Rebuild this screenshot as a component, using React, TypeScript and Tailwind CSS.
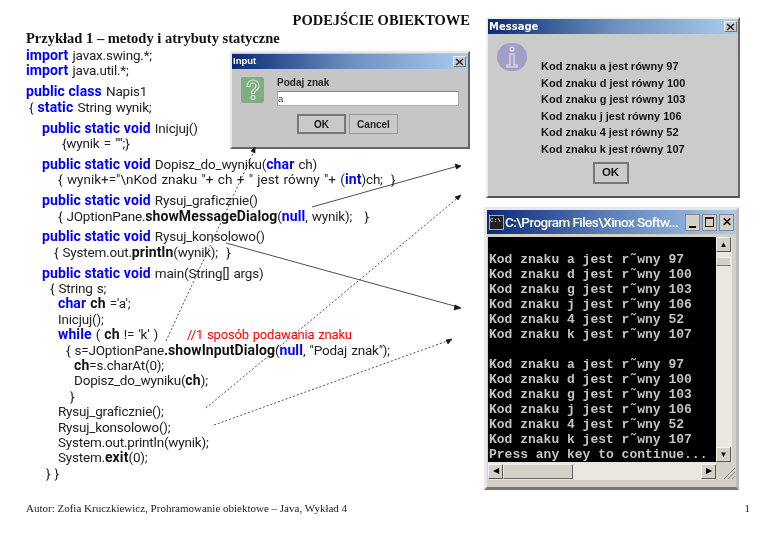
import React from "react";

const B = ({ children }: { children: React.ReactNode }) => <b className="font-bold text-[#0000ff] text-[14px] tracking-[0.1px] [word-spacing:0px]">{children}</b>;
const K = ({ children }: { children: React.ReactNode }) => <b className="font-bold text-[#111] text-[14px] tracking-[0.1px] [word-spacing:0px]">{children}</b>;

const Line = ({ pl = 0, children }: { pl?: number; children: React.ReactNode }) => (
  <div className="h-[15.4px] leading-[15.4px] whitespace-pre" style={{ paddingLeft: pl }}>{children}</div>
);

const Group = ({ children }: { children: React.ReactNode }) => <div className="mb-[5.5px]">{children}</div>;

const msgs = ["a jest równy 97", "d jest równy 100", "g jest równy 103", "j jest równy 106", "4 jest równy 52", "k jest równy 107"];
const con = ["a jest r˜wny 97", "d jest r˜wny 100", "g jest r˜wny 103", "j jest r˜wny 106", "4 jest r˜wny 52", "k jest r˜wny 107"];

const XBtn = () => (
  <div className="w-[13px] h-[11px] bg-[#cccccc] border border-[#eee] border-r-[#777] border-b-[#777] flex items-center justify-center">
    <svg width="9" height="8" viewBox="0 0 9 8"><path d="M1 1l7 6M8 1L1 7" stroke="#222" strokeWidth="1.6" /></svg>
  </div>
);

function InputDialog() {
  return (
    <div className="absolute left-[230px] top-[51px] w-[240px] h-[98px] bg-[#c6c6c6] border-2 border-[#e8e8e8] border-r-[#666] border-b-[#666] flex flex-col font-['Liberation_Sans',sans-serif]">
      <div className="h-[15px] mt-[1px] bg-gradient-to-r from-[#0c2a78] via-[#6d8fbd] to-[#a9cdf0] flex items-center justify-between pl-[1px] pr-[2px]">
        <span className="text-white text-[9.5px] font-bold">Input</span>
        <XBtn />
      </div>
      <div className="flex pl-[9px] pt-[7px]">
        <div className="w-[23px] h-[26px] bg-[#7fae80] rounded-[2px] flex items-center justify-center mt-[1px]">
          <svg width="16" height="22" viewBox="0 0 16 22" fill="none" stroke="#dcebdc" strokeWidth="1.1">
            <path d="M2 7.5C2 3 5 1 8 1s6 2 6 6c0 3-2 4-3.5 5-.8.6-1 1.2-1 2.5H6.5c0-2.2.6-3.3 2-4.3C10 9 11 8.500 11 7c0-1.500-1.300-3-3-3S5 5.500 5 7.500z" />
            <circle cx="8" cy="18.500" r="2" />
          </svg>
        </div>
        <div className="ml-[13px] w-[182px]">
          <div className="text-[10px] font-bold text-[#222] leading-[14px]">Podaj znak</div>
          <div className="h-[15px] mt-[1px] bg-white border border-[#aaa] border-t-[#888] text-[9.5px] leading-[14px] text-[#444]">a</div>
          <div className="flex gap-[3px] ml-[20px] mt-[8px]">
            <div className="w-[49px] h-[20px] border-2 border-[#777] bg-[#c9c9c9] flex items-center justify-center text-[10px] font-bold text-[#111]">OK</div>
            <div className="w-[49px] h-[20px] border border-[#999] bg-[#c9c9c9] flex items-center justify-center text-[10px] font-bold text-[#222]">Cancel</div>
          </div>
        </div>
      </div>
    </div>
  );
}

function MessageDialog() {
  return (
    <div className="absolute left-[486px] top-[17px] w-[254px] h-[181px] bg-[#cbcbcb] border-2 border-[#eee] border-r-[#666] border-b-[#555] flex flex-col font-['Liberation_Sans',sans-serif]">
      <div className="h-[15px] bg-gradient-to-r from-[#0c2a78] via-[#6d8fbd] to-[#a9cdf0] flex items-center justify-between pl-[1px] pr-[1px]">
        <span className="text-white text-[10px] font-bold font-['DejaVu_Sans',sans-serif]">Message</span>
        <XBtn />
      </div>
      <div className="flex relative">
        <div className="w-[30px] h-[28px] rounded-full bg-[#a29fc6] ml-[9px] mt-[9px] flex items-center justify-center">
          <svg width="12" height="22" viewBox="0 0 12 22" fill="none" stroke="#e7e6f2" strokeWidth="1.1">
            <circle cx="6" cy="3" r="2" /><path d="M4 8h4v11h3v2H1v-2h3z" />
          </svg>
        </div>
        <div className="ml-[14px] mt-[24px]">
          {msgs.map((m) => (
            <div key={m} className="text-[11px] font-bold leading-[16.5px] text-[#111] whitespace-pre">Kod znaku {m}</div>
          ))}
        </div>
      </div>
      <div className="self-center mt-[5px] ml-[-5px] w-[36px] h-[22px] border-2 border-[#777] flex items-center justify-center text-[11.5px] font-bold text-[#111]">OK</div>
    </div>
  );
}

function ConsoleWindow() {
  const sbBtn = "w-[15px] h-[15px] bg-[#d4d0c8] border border-[#f4f4f4] border-r-[#555] border-b-[#555] flex items-center justify-center text-[8px] text-black shrink-0";
  const capBtn = "w-[15px] h-[17px] bg-[#d4d0c8] border border-[#888] flex items-center justify-center";
  return (
    <div className="absolute left-[484px] top-[207px] w-[255px] h-[283px] bg-[#d4d0c8] border-[3px] border-[#e8e8e8] border-r-[#bbb] border-b-[#777] flex flex-col">
      <div className="h-[24px] bg-gradient-to-r from-[#0c2a78] via-[#5d82b8] to-[#a9cdf0] flex items-center pl-[2px] pr-[2px] shrink-0">
        <div className="w-[15px] h-[15px] bg-[#222] border border-[#aaa] text-[6px] leading-[10px] text-white font-['Liberation_Mono',monospace] shrink-0">C:\</div>
        <span className="ml-[1px] text-white text-[13.5px] font-medium font-['Roboto',sans-serif] whitespace-pre tracking-[-0.55px]">C:\Program Files\Xinox Softw...</span>
        <div className="flex ml-auto text-[12px] font-bold font-['Liberation_Sans',sans-serif] text-[#111]">
          <div className={`${capBtn} items-end`}><div className="w-[7px] h-[2px] bg-black mb-[2px]" /></div>
          <div className={`${capBtn} ml-[2px]`}><div className="w-[9px] h-[10px] border border-[#222] border-t-2" /></div>
          <div className={`${capBtn} ml-[2px]`}>✕</div>
        </div>
      </div>
      <div className="flex h-[225px] mt-[3px] ml-[1px] shrink-0">
        <div className="w-[228px] bg-black text-[#c4c4c4] font-['Liberation_Mono',monospace] text-[13px] font-bold leading-[15px] pl-[1px] pt-[15px] whitespace-pre overflow-hidden">
          {con.map((c) => <div key={c}>Kod znaku {c}</div>)}
          <div>&nbsp;</div>
          {con.map((c) => <div key={c}>Kod znaku {c}</div>)}
          <div>Press any key to continue...</div>
        </div>
        <div className="w-[16px] bg-[#e9e7e0] flex flex-col justify-between">
          <div>
            <div className={sbBtn}>▲</div>
            <div className="h-[9px] w-[15px] bg-[#d4d0c8] border border-[#eee] border-b-[#777] mt-[5px]" />
          </div>
          <div className={sbBtn}>▼</div>
        </div>
      </div>
      <div className="flex h-[18px] ml-[1px] items-center bg-[#e9e7e0]">
        <div className={sbBtn}>◀</div>
        <div className="w-[70px] h-[15px] bg-[#d4d0c8] border border-[#eee] border-r-[#666] border-b-[#666] shrink-0" />
        <div className="w-[128px]" />
        <div className={sbBtn}>▶</div>
        <div className="flex-1 h-full bg-[#d4d0c8] flex items-end justify-end">
          <svg width="13" height="13" viewBox="0 0 13 13" stroke="#888" strokeWidth="1"><path d="M12 1L1 12M12 5L5 12M12 9L9 12" /></svg>
        </div>
      </div>
    </div>
  );
}

export default function App() {
  return (
    <div className="relative w-[768px] h-[543px] bg-white overflow-hidden font-['Liberation_Serif',serif] text-[#111] blur-[0.35px]">
      <div className="flex justify-end pr-[298px] pt-[12px] text-[14.5px] font-bold leading-[17px]">PODEJŚCIE OBIEKTOWE</div>
      <div className="pl-[26px] text-[14.5px] font-bold leading-[16px] mt-[1px]">Przykład 1 – metody i atrybuty statyczne</div>

      <div className="pl-[26px] mt-[2px] font-['Roboto',sans-serif] text-[13.5px] tracking-[-0.2px] [word-spacing:1px] text-[#222]">
        <Group>
          <Line><B>import</B> javax.swing.*;</Line>
          <Line><B>import</B> java.util.*;</Line>
        </Group>
        <Group>
          <Line><B>public class</B> Napis1</Line>
          <Line pl={3}>{"{ "}<B>static</B> String wynik;</Line>
        </Group>
        <Group>
          <Line pl={16}><B>public static void</B> Inicjuj()</Line>
          <Line pl={36}>{"{wynik = \"\";}"}</Line>
        </Group>
        <Group>
          <Line pl={16}><B>public static void</B> Dopisz_do_wyniku(<B>char</B> ch)</Line>
          <Line pl={32}><span className="tracking-[0px]">{"{ wynik+=\"\\nKod znaku \"+ ch + \" jest równy \"+ ("}</span><B>int</B>{")ch;  }"}</Line>
        </Group>
        <Group>
          <Line pl={16}><B>public static void</B> Rysuj_graficznie()</Line>
          <Line pl={32}>{"{ JOptionPane."}<K>showMessageDialog</K>(<B>null</B>{", wynik);   }"}</Line>
        </Group>
        <Group>
          <Line pl={16}><B>public static void</B> Rysuj_konsolowo()</Line>
          <Line pl={28}>{"{ System.out."}<K>println</K>{"(wynik);  }"}</Line>
        </Group>
        <Line pl={16}><B>public static void</B> main(String[] args)</Line>
        <Line pl={24}>{"{ String s;"}</Line>
        <Line pl={32}><B>char</B> <K>ch</K> ='a';</Line>
        <Line pl={32}>Inicjuj();</Line>
        <Line pl={32}><B>while</B> ( <K>ch</K> != 'k' )<span className="text-[#ff0000] text-[13px] ml-[29px]">//1 sposób podawania znaku</span></Line>
        <Line pl={40}>{"{ s=JOptionPane"}<K>.showInputDialog</K>(<B>null</B>{", \"Podaj znak\");"}</Line>
        <Line pl={48}><K>ch</K>=s.charAt(0);</Line>
        <Line pl={48}>Dopisz_do_wyniku(<K>ch</K>);</Line>
        <Line pl={44}>{"}"}</Line>
        <Line pl={32}>Rysuj_graficznie();</Line>
        <Line pl={32}>Rysuj_konsolowo();</Line>
        <Line pl={32}>System.out.println(wynik);</Line>
        <Line pl={32}>System.<K>exit</K>(0);</Line>
        <Line pl={20}>{"} }"}</Line>
      </div>

      <div className="flex justify-between pl-[26px] pr-[18px] mt-[21px] text-[11px] leading-[12px] text-[#222]">
        <span>Autor: Zofia Kruczkiewicz, Prohramowanie obiektowe – Java, Wykład 4</span>
        <span>1</span>
      </div>

      <InputDialog />
      <MessageDialog />
      <ConsoleWindow />

      <svg className="absolute inset-0 pointer-events-none" width="768" height="543" fill="none" stroke="#222" strokeWidth="0.8">
        <path d="M166 341L255 149" strokeDasharray="2 2" />
        <path d="M255 147l-4 4 4 2z" fill="#111" />
        <path d="M312 207L458 166" />
        <path d="M461 166l-6-2 1.5 5z" fill="#111" />
        <path d="M206 408L460 196" strokeDasharray="2 2" />
        <path d="M461 195l-6 2 3 3z" fill="#111" />
        <path d="M226 243L458 307" />
        <path d="M461 308l-6-3-1 5z" fill="#111" />
        <path d="M214 425L450 340" strokeDasharray="2 2" />
        <path d="M452 339l-6 1 2 4z" fill="#111" />
      </svg>
    </div>
  );
}
